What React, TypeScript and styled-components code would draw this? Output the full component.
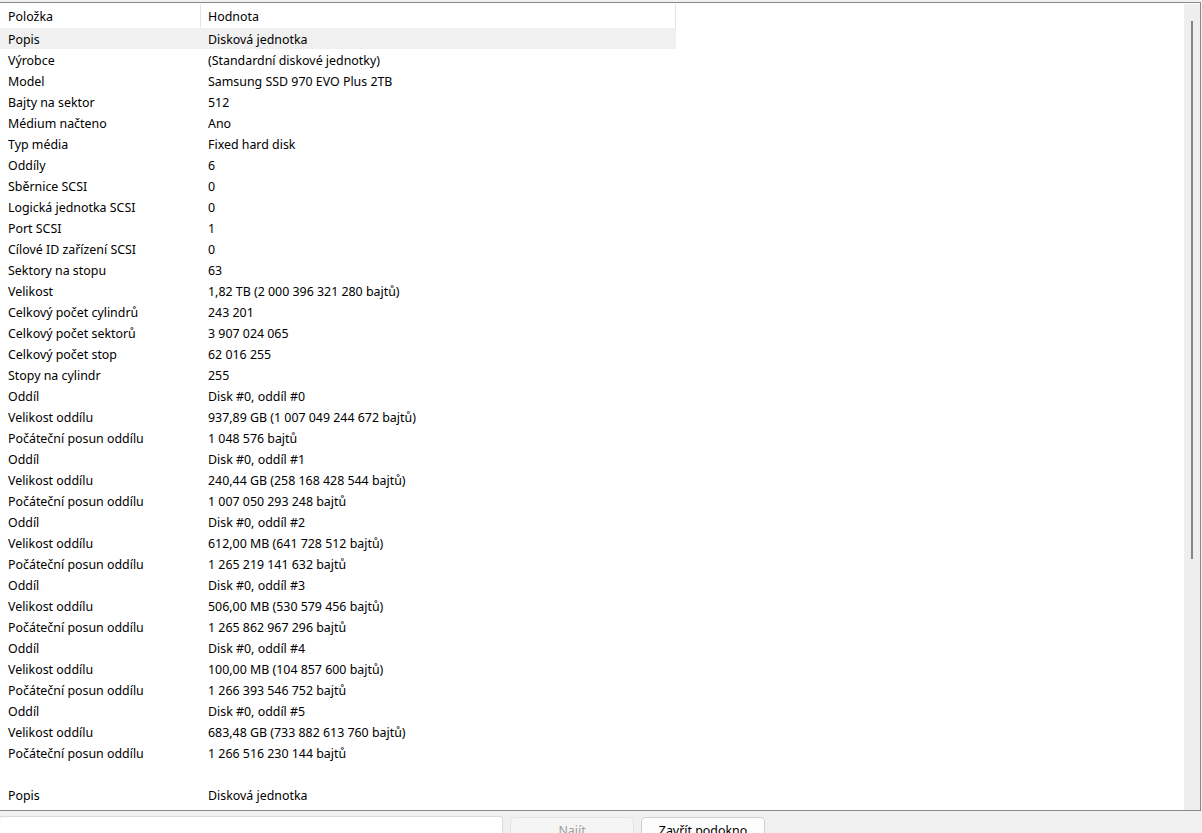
import React from "react";
import styled, { createGlobalStyle } from "styled-components";

const GlobalStyle = createGlobalStyle`
  html, body {
    margin: 0;
    padding: 0;
    background: #f0f0f0;
    overflow: hidden;
  }
  body {
    font-family: "Noto Sans", "Segoe UI", "Liberation Sans", sans-serif;
    font-size: 12.4px;
    color: #000;
  }
`;

const Page = styled.div`
  width: 1202px;
  height: 833px;
  display: flex;
  flex-direction: column;
  padding-top: 2px;
  box-sizing: border-box;
  overflow: hidden;
`;

const Frame = styled.div`
  width: 1201px;
  height: 809px;
  box-sizing: border-box;
  border-top: 1px solid #868a8e;
  border-right: 1px solid #868a8e;
  border-bottom: 1px solid #868a8e;
  background: #fff;
  display: flex;
  flex-direction: row;
  flex-shrink: 0;
`;

const ListArea = styled.div`
  flex: 1;
  overflow: hidden;
  display: flex;
  flex-direction: column;
`;

const HeaderRow = styled.div`
  display: flex;
  height: 25px;
  flex-shrink: 0;
`;

const HeaderCell = styled.div<{ $w: number; $pad: number }>`
  width: ${(p) => p.$w}px;
  box-sizing: border-box;
  padding-left: ${(p) => p.$pad}px;
  padding-top: 1px;
  display: flex;
  align-items: center;
  border-right: 1px solid #e5e5e5;
  margin-top: 1px;
  height: 24px;
`;

const Row = styled.div<{ $selected?: boolean }>`
  display: flex;
  height: 21px;
  flex-shrink: 0;
  width: 676px;
  align-items: center;
  box-sizing: border-box;
  padding-top: 2px;
  background: ${(p) => (p.$selected ? "#f0f0f0" : "transparent")};
  white-space: nowrap;
`;

const Cell = styled.div<{ $w: number }>`
  width: ${(p) => p.$w}px;
  box-sizing: border-box;
  padding-left: 8px;
  flex-shrink: 0;
`;

const ScrollTrack = styled.div`
  width: 16px;
  flex-shrink: 0;
  background: #eeeeee;
  margin-top: 1px;
  padding-top: 17px;
  box-sizing: border-box;
  display: flex;
  justify-content: center;
`;

const ScrollThumb = styled.div`
  width: 2px;
  height: 538px;
  background: #858585;
`;

const BottomBar = styled.div`
  flex: 1;
  display: flex;
  align-items: flex-start;
  padding-top: 5px;
  gap: 7px;
`;

const SearchInput = styled.div`
  width: 504px;
  height: 24px;
  margin-left: -1px;
  box-sizing: border-box;
  background: #fff;
  border: 1px solid #dcdcdc;
  border-bottom-color: #8a8a8a;
  border-radius: 3px;
`;

const Button = styled.div<{ $disabled?: boolean }>`
  width: 124px;
  height: 24px;
  margin-top: 1px;
  box-sizing: border-box;
  border-radius: 4px;
  border: 1px solid ${(p) => (p.$disabled ? "#e3e3e3" : "#d0d0d0")};
  background: ${(p) => (p.$disabled ? "#f5f5f5" : "#fdfdfd")};
  color: ${(p) => (p.$disabled ? "#9d9d9d" : "#000")};
  display: flex;
  justify-content: center;
  align-items: center;
  padding-top: 3px;
`;

const rows: [string, string][] = [
  ["Popis", "Disková jednotka"],
  ["Výrobce", "(Standardní diskové jednotky)"],
  ["Model", "Samsung SSD 970 EVO Plus 2TB"],
  ["Bajty na sektor", "512"],
  ["Médium načteno", "Ano"],
  ["Typ média", "Fixed hard disk"],
  ["Oddíly", "6"],
  ["Sběrnice SCSI", "0"],
  ["Logická jednotka SCSI", "0"],
  ["Port SCSI", "1"],
  ["Cílové ID zařízení SCSI", "0"],
  ["Sektory na stopu", "63"],
  ["Velikost", "1,82 TB (2 000 396 321 280 bajtů)"],
  ["Celkový počet cylindrů", "243 201"],
  ["Celkový počet sektorů", "3 907 024 065"],
  ["Celkový počet stop", "62 016 255"],
  ["Stopy na cylindr", "255"],
  ["Oddíl", "Disk #0, oddíl #0"],
  ["Velikost oddílu", "937,89 GB (1 007 049 244 672 bajtů)"],
  ["Počáteční posun oddílu", "1 048 576 bajtů"],
  ["Oddíl", "Disk #0, oddíl #1"],
  ["Velikost oddílu", "240,44 GB (258 168 428 544 bajtů)"],
  ["Počáteční posun oddílu", "1 007 050 293 248 bajtů"],
  ["Oddíl", "Disk #0, oddíl #2"],
  ["Velikost oddílu", "612,00 MB (641 728 512 bajtů)"],
  ["Počáteční posun oddílu", "1 265 219 141 632 bajtů"],
  ["Oddíl", "Disk #0, oddíl #3"],
  ["Velikost oddílu", "506,00 MB (530 579 456 bajtů)"],
  ["Počáteční posun oddílu", "1 265 862 967 296 bajtů"],
  ["Oddíl", "Disk #0, oddíl #4"],
  ["Velikost oddílu", "100,00 MB (104 857 600 bajtů)"],
  ["Počáteční posun oddílu", "1 266 393 546 752 bajtů"],
  ["Oddíl", "Disk #0, oddíl #5"],
  ["Velikost oddílu", "683,48 GB (733 882 613 760 bajtů)"],
  ["Počáteční posun oddílu", "1 266 516 230 144 bajtů"],
  ["", ""],
  ["Popis", "Disková jednotka"],
];

export default function App() {
  return (
    <>
      <GlobalStyle />
      <Page>
        <Frame>
          <ListArea>
            <HeaderRow>
              <HeaderCell $w={201} $pad={8}>Položka</HeaderCell>
              <HeaderCell $w={475} $pad={7}>Hodnota</HeaderCell>
            </HeaderRow>
            {rows.map(([k, v], i) => (
              <Row key={i} $selected={i === 0}>
                <Cell $w={200}>{k}</Cell>
                <Cell $w={476}>{v}</Cell>
              </Row>
            ))}
          </ListArea>
          <ScrollTrack>
            <ScrollThumb />
          </ScrollTrack>
        </Frame>
        <BottomBar>
          <SearchInput />
          <Button $disabled>Najít</Button>
          <Button>Zavřít podokno</Button>
        </BottomBar>
      </Page>
    </>
  );
}
